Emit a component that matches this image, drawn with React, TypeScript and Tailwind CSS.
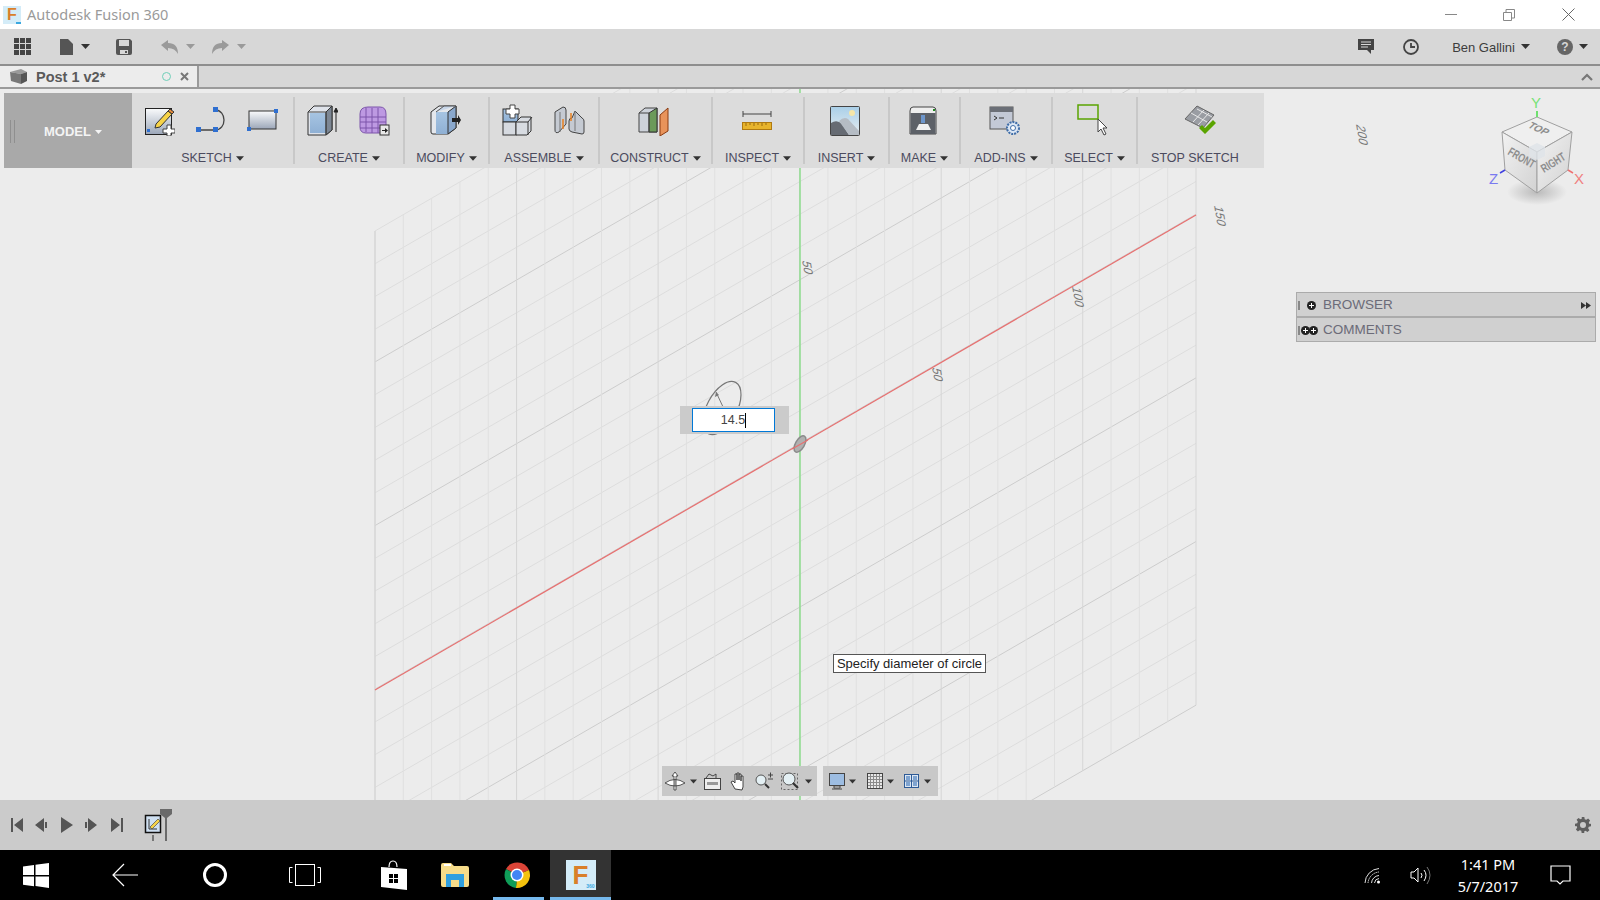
import React from "react";

const Caret = ({ c = "#333", w = 9, h = 5 }: { c?: string; w?: number; h?: number }) => (
  <svg width={w} height={h} viewBox="0 0 9 5" className="shrink-0">
    <path d="M0 0h9L4.5 5z" fill={c} />
  </svg>
);

const I = ({ children }: { children: React.ReactNode }) => (
  <svg width="32" height="32" viewBox="0 0 32 32" className="shrink-0">
    {children}
  </svg>
);

const Defs = () => (
  <svg width="0" height="0" className="block h-0 w-0">
    <defs>
      <linearGradient id="pad" x1="0" y1="0" x2="0" y2="1">
        <stop offset="0" stopColor="#fafbfc" />
        <stop offset="1" stopColor="#9ba6b8" />
      </linearGradient>
      <linearGradient id="blue" x1="0" y1="0" x2="0" y2="1">
        <stop offset="0" stopColor="#a6c4e2" />
        <stop offset="1" stopColor="#8fb0d4" />
      </linearGradient>
      <linearGradient id="sky" x1="0" y1="0" x2="0" y2="1">
        <stop offset="0" stopColor="#a9cfe8" />
        <stop offset="1" stopColor="#e8eef2" />
      </linearGradient>
      <linearGradient id="cube" x1="0" y1="0" x2="1" y2="1">
        <stop offset="0" stopColor="#f2f2f2" />
        <stop offset="1" stopColor="#d2d2d2" />
      </linearGradient>
    </defs>
  </svg>
);

const NewSketch = () => (
  <I>
    <rect x="2.5" y="4.5" width="26" height="26" fill="url(#pad)" stroke="#222" />
    <rect x="4" y="25" width="3" height="3" fill="#2f6fd0" />
    <path d="M13 20l12-13 4 3-12 13-5 1z" fill="#f7d348" stroke="#333" />
    <path d="M25 7l2-2 4 3-2 2z" fill="#e58a3c" stroke="#333" />
    <path d="M20 25h4v-4h4v4h4v4h-4v3h-4v-3h-4z" fill="#fff" stroke="#444" />
  </I>
);
const Spline = () => (
  <I>
    <path d="M3 26H20M20 6C32 6 32 26 20 26" fill="none" stroke="#444" strokeWidth="1.3" />
    <rect x="1" y="23" width="5" height="5" fill="#2f6fd0" />
    <rect x="18" y="23" width="5" height="5" fill="#2f6fd0" />
    <rect x="18" y="3" width="5" height="5" fill="#2f6fd0" />
  </I>
);
const RectTool = () => (
  <I>
    <rect x="2" y="7" width="27" height="18" fill="url(#pad)" stroke="#333" />
    <rect x="27" y="5" width="4" height="4" fill="#2f6fd0" />
    <rect x="0" y="23" width="4" height="4" fill="#2f6fd0" />
  </I>
);
const Extrude = () => (
  <I>
    <path d="M2 8l6-6h18v24l-6 5H2z" fill="#dfe3ea" stroke="#333" />
    <path d="M4 9h16v20H4z" fill="url(#blue)" />
    <path d="M20 8l6-6v24l-6 5z" fill="#7d8794" stroke="#333" />
    <path d="M2 8h18v23" fill="none" stroke="#444" />
    <path d="M30 28V5M28 8l2-4 2 4z" stroke="#222" fill="#222" />
  </I>
);
const Form = () => (
  <I>
    <path d="M2 10q0-7 8-7h12q6 0 6 7v14q0 5-6 5H8q-6 0-6-6z" fill="#bd99e2" stroke="#7c55aa" />
    <path d="M8 4v24M14 4v25M20 4v25M2 13h26M2 18h26M2 24h26" stroke="#7c55aa" />
    <rect x="22" y="21" width="9" height="10" fill="#e8e8e8" stroke="#333" />
    <path d="M24 26h3v-2l3 2.500-3 2.500v-2h-3z" fill="#222" />
  </I>
);
const Modify = () => (
  <I>
    <path d="M2 8l8-6h17v22l-8 6H4q-2 0-2-2z" fill="#e4e7ec" stroke="#333" />
    <path d="M7 8h12v22H7z" fill="url(#blue)" />
    <path d="M19 8l8-6v22l-8 6z" fill="#8aa8cc" stroke="#333" />
    <path d="M7 8l8-6h12" fill="#c6d5e8" stroke="#555" />
    <path d="M23 14h6v-3l3 5-3 5v-3h-6z" fill="#222" />
  </I>
);
const Assemble = () => (
  <I>
    <rect x="2" y="5" width="15" height="13" fill="url(#blue)" stroke="#333" />
    <rect x="2" y="18" width="13" height="13" fill="#d6dae0" stroke="#333" />
    <path d="M15 18l5-5h10v14l-4 4H15z" fill="#d8dce2" stroke="#333" />
    <path d="M15 18h12v13M27 18l4-5" fill="none" stroke="#333" />
    <path d="M5 5h4V1h5v4h4v5h-4v4H9v-4H5z" fill="#fff" stroke="#444" />
  </I>
);
const Joint = () => (
  <I>
    <path d="M2 8l8-5q3 0 3 3v14l-7 8q-4 2-4-2z" fill="#c5cad2" stroke="#444" />
    <path d="M7 8v20" stroke="#777" />
    <path d="M16 17q0-3 3-3l3-7 7 7q2 1 2 3v11q0 2-2 2l-10-2q-3-1-3-3z" fill="#c5cad2" stroke="#444" />
    <path d="M22 7v20" stroke="#777" />
    <path d="M10 15v10M18 9v8" stroke="#e8801f" strokeWidth="1.5" />
  </I>
);
const Construct = () => (
  <I>
    <path d="M1 9l6-5h12v24H1z" fill="#cdd2da" stroke="#444" />
    <path d="M11 9l8-5v24h-8z" fill="#6b9a5a" stroke="#333" />
    <path d="M1 9h10v19" fill="none" stroke="#444" />
    <path d="M22 11l8-7v23l-8 5z" fill="#e8935a" stroke="#8a3a10" />
  </I>
);
const Inspect = () => (
  <I>
    <path d="M2 7v6M30 7v6M2 10h28" stroke="#444" fill="none" />
    <rect x="1.500" y="18.500" width="29" height="7" fill="#e8b42c" stroke="#b07a10" />
    <path d="M5 19v3M9 19v2M13 19v3M17 19v2M21 19v3M25 19v2" stroke="#9a6a10" />
  </I>
);
const Insert = () => (
  <I>
    <rect x="1.500" y="2.500" width="29" height="29" fill="url(#sky)" stroke="#444" rx="1" />
    <circle cx="23" cy="9" r="3" fill="#f6e6a8" />
    <path d="M2 31V19q6-4 11 1l7 11z" fill="#666b73" />
    <path d="M10 17q5-5 9-2l11 12v4H20z" fill="#b5bcc4" />
  </I>
);
const Make = () => (
  <I>
    <path d="M3 7q0-4 3-4h20q3 0 3 4v23H3z" fill="#eeeeee" stroke="#444" />
    <rect x="3.500" y="9" width="25" height="21" fill="#5d6168" />
    <path d="M9 26l3-6h9l3 6z" fill="#f0f0f0" />
    <rect x="14" y="11" width="4" height="8" fill="#6d96cc" />
    <rect x="26" y="5" width="2" height="2" fill="#1f8a1f" />
  </I>
);
const AddIns = () => (
  <I>
    <rect x="1" y="3" width="23" height="22" fill="#c3c9d6" stroke="#555" />
    <rect x="1" y="3" width="23" height="5" fill="#6b6f77" />
    <path d="M5 12l3 2-3 2M10 14h5" stroke="#333" fill="none" />
    <circle cx="24" cy="24" r="6" fill="#dbe6f4" stroke="#3f6da8" strokeWidth="2" strokeDasharray="2 1" />
    <circle cx="24" cy="24" r="2.500" fill="#fff" stroke="#3f6da8" />
  </I>
);
const SelectIcon = () => (
  <I>
    <rect x="1" y="1" width="20" height="14" fill="none" stroke="#5aa400" strokeWidth="1.500" />
    <path d="M21 15v13l3-3 3 6 2-1-3-6h4z" fill="#fff" stroke="#444" />
  </I>
);
const StopSketch = () => (
  <I>
    <path d="M1 15L13 2l17 9-11 13z" fill="#9a9da3" stroke="#666" />
    <path d="M7 9l16 9M13 5l15 8M9 18L20 6M14 21L25 9" stroke="#e8e8e8" />
    <path d="M15 24l3-3 3 3 8-8 3 3-11 11z" fill="#5aa400" />
  </I>
);

type GroupProps = { w: string; label: string; caret?: boolean; children: React.ReactNode };
const Group = ({ w, label, caret = true, children }: GroupProps) => (
  <div className={`flex flex-col items-center pt-[11px] ${w}`}>
    <div className="flex h-[32px] items-center justify-center gap-5 pr-[3px]">{children}</div>
    <div className="mt-[15px] flex h-[14px] items-center gap-[4px] text-[12.5px] leading-[14px] text-[#4b4b5e]">
      {label}
      {caret && <Caret w={8} h={5} c="#333" />}
    </div>
  </div>
);
const Div = () => <div className="h-[67px] w-[2px] shrink-0 self-center bg-[#c8c8c8]" />;

const Ribbon = () => (
  <div className="absolute left-[4px] top-[4px] flex h-[75px] w-[1260px] bg-[#dcdcdc]">
    <div className="flex w-[128px] items-center bg-[#a9a9a9] pl-[6px] pt-[2px]">
      <div className="h-[23px] w-[5px] border-x border-[#8f8f8f]" />
      <div className="ml-[29px] flex items-center gap-[4px] text-[13px] font-bold text-[#f4f4f4]">
        MODEL
        <Caret w={7} h={4} c="#f4f4f4" />
      </div>
    </div>
    <Group w="w-[161px]" label="SKETCH">
      <NewSketch />
      <Spline />
      <RectTool />
    </Group>
    <Div />
    <Group w="w-[108px]" label="CREATE">
      <Extrude />
      <Form />
    </Group>
    <Div />
    <Group w="w-[83px]" label="MODIFY">
      <Modify />
    </Group>
    <Div />
    <Group w="w-[108px]" label="ASSEMBLE">
      <Assemble />
      <Joint />
    </Group>
    <Div />
    <Group w="w-[111px]" label="CONSTRUCT">
      <Construct />
    </Group>
    <Div />
    <Group w="w-[90px]" label="INSPECT">
      <Inspect />
    </Group>
    <Div />
    <Group w="w-[83px]" label="INSERT">
      <Insert />
    </Group>
    <Div />
    <Group w="w-[69px]" label="MAKE">
      <Make />
    </Group>
    <Div />
    <Group w="w-[90px]" label="ADD-INS">
      <AddIns />
    </Group>
    <Div />
    <Group w="w-[83px]" label="SELECT">
      <SelectIcon />
    </Group>
    <Div />
    <Group w="w-[126px] pr-[12px]" label="STOP SKETCH" caret={false}>
      <div className="ml-[13px]">
        <StopSketch />
      </div>
    </Group>
  </div>
);

// grid plane, drawn in page coordinates
const STEP_X = 28.31;
const STEP_Y = 32.73;
const RISE = 475;
const Grid = () => {
  const rows = Array.from({ length: 30 }, (_, i) => i);
  const cols = Array.from({ length: 30 }, (_, i) => i);
  return (
    <svg className="absolute inset-0 h-full w-full" viewBox="0 89 1600 711">
      {rows.map((i) => {
        const y = 231 + STEP_Y * i;
        const major = (i + 1) % 5 === 0;
        return <line key={i} x1="375" y1={y} x2="1196" y2={y - RISE} stroke={major ? "#cdcdcd" : "#dddddd"} />;
      })}
      {cols.map((i) => {
        const x = 375 + STEP_X * i;
        const top = 231 - (x - 375) * (RISE / 821);
        const bottom = 231 + 29 * STEP_Y - (x - 375) * (RISE / 821);
        const major = i % 5 === 0 || i === 29;
        return <line key={i} x1={x} y1={top} x2={x} y2={bottom} stroke={major ? "#d6d6d6" : "#e0e0e0"} strokeWidth={i === 0 ? 1.5 : 1} />;
      })}
      <line x1="375" y1="690" x2="1196" y2="215" stroke="#e86f6f" strokeWidth="1.200" />
      <line x1="800" y1="89" x2="800" y2="800" stroke="#8edc8e" strokeWidth="1.500" />
      <g fontFamily="Liberation Sans, sans-serif" fontSize="12" fill="#777">
        <text transform="translate(802 260) rotate(80) skewX(-25)">50</text>
        <text transform="translate(932 367) rotate(80) skewX(-25)">50</text>
        <text transform="translate(1072 286) rotate(80) skewX(-25)">100</text>
        <text transform="translate(1214 205) rotate(80) skewX(-25)">150</text>
        <text transform="translate(1356 124) rotate(80) skewX(-25)">200</text>
      </g>
      <ellipse cx="722" cy="408" rx="15" ry="29" transform="rotate(28 722 408)" fill="none" stroke="#777" strokeWidth="1.200" />
      <path d="M716 392l8 17" stroke="#777" fill="none" />
      <path d="M716 392l-1 5 4-2z" fill="#777" />
      <ellipse cx="800" cy="444" rx="4.500" ry="9" transform="rotate(30 800 444)" fill="#b0b0b0" stroke="#8a8a8a" strokeWidth="1.500" />
      <line x1="792" y1="449" x2="808" y2="440" stroke="#e86f6f" strokeWidth="1.200" />
    </svg>
  );
};

const ViewCube = () => (
  <svg className="absolute right-0 top-[5px]" width="130" height="116" viewBox="1470 94 130 116">
    <defs>
      <radialGradient id="shade">
        <stop offset="0" stopColor="#999" stopOpacity="0.6" />
        <stop offset="1" stopColor="#999" stopOpacity="0" />
      </radialGradient>
    </defs>
    <ellipse cx="1537" cy="192" rx="30" ry="13" fill="url(#shade)" />
    <path d="M1537 117l35 15-35 20-35-20z" fill="#efefef" stroke="#a0a0a0" />
    <path d="M1502 132l35 20v41l-32-23z" fill="url(#cube)" stroke="#a0a0a0" />
    <path d="M1572 132l-35 20v41l31-23z" fill="url(#cube)" stroke="#a0a0a0" />
    <path d="M1537 143l8 4v9l-8 4-8-4v-9z" fill="#dfe3e8" opacity="0.8" />
    <path d="M1537 117v-6" stroke="#6fe06f" strokeWidth="2" />
    <path d="M1505 170l-5 3" stroke="#4040e0" strokeWidth="1.500" />
    <path d="M1568 170l5 3" stroke="#ef7070" strokeWidth="1.500" />
    <g fontFamily="Liberation Sans, sans-serif" fontWeight="400">
      <text x="1531" y="108" fontSize="15" fill="#76e276">Y</text>
      <text x="1574" y="184" fontSize="15" fill="#f08080">X</text>
      <text x="1489" y="184" fontSize="15" fill="#7a7af0">Z</text>
    </g>
    <g fontFamily="Liberation Sans, sans-serif" fontSize="10" fill="#8e8e8e" fontWeight="700">
      <text transform="translate(1527 127) rotate(25) skewX(-20)">TOP</text>
      <text transform="translate(1507 154) rotate(30) scale(0.85 1.2)">FRONT</text>
      <text transform="translate(1544 173) rotate(-32) scale(0.85 1.2)">RIGHT</text>
    </g>
  </svg>
);

const NavIcons = () => (
  <div className="absolute bottom-[4px] left-[662px] flex gap-[6px]">
    <div className="flex h-[30px] w-[155px] items-center bg-[#c8c8c8] pl-[1px]">
      <svg width="24" height="22" viewBox="0 0 24 22">
        <path d="M12 2l-3 4h2v14h2V6h2zM2 13q10-7 20 0-10 6-20 0z" fill="#fff" stroke="#333" strokeWidth="0.8" />
      </svg>
      <div className="ml-[3px]"><Caret w={7} h={5} /></div>
      <svg className="ml-[6px]" width="20" height="20" viewBox="0 0 20 20">
        <rect x="1.500" y="7.500" width="16" height="11" fill="#eee" stroke="#444" />
        <rect x="4" y="11" width="11" height="3" fill="#999" />
        <path d="M3 7l3-4 4 2 3-2v4" fill="none" stroke="#444" />
      </svg>
      <svg className="ml-[7px]" width="18" height="20" viewBox="0 0 18 20">
        <path d="M5 18l-4-7 2-1 2 2V3h2v6-7h2v7-6h2v7-5h2v11l-1 3z" fill="#fff" stroke="#333" strokeWidth="0.9" />
      </svg>
      <svg className="ml-[6px]" width="20" height="20" viewBox="0 0 20 20">
        <circle cx="7" cy="9" r="5" fill="#e4f0f4" stroke="#555" />
        <path d="M11 13l4 4" stroke="#333" strokeWidth="2" />
        <path d="M14 4h5M16.500 1.500v5M14 8h5" stroke="#444" />
      </svg>
      <svg className="ml-[7px]" width="20" height="20" viewBox="0 0 20 20">
        <rect x="0.500" y="2.500" width="16" height="16" fill="none" stroke="#666" strokeDasharray="2 2" />
        <circle cx="8" cy="8" r="6" fill="#e4f0f4" stroke="#555" />
        <path d="M12 12l5 5" stroke="#333" strokeWidth="2.200" />
      </svg>
      <div className="ml-[4px]"><Caret w={7} h={5} /></div>
    </div>
    <div className="flex h-[30px] w-[115px] items-center bg-[#c8c8c8] pl-[6px]">
      <svg width="16" height="17" viewBox="0 0 16 17">
        <rect x="0.500" y="0.500" width="15" height="12" fill="#9dbde2" stroke="#444" />
        <path d="M5 13h6v2H5zM3 16h10" stroke="#444" fill="#eee" />
      </svg>
      <div className="ml-[4px]"><Caret w={7} h={5} /></div>
      <svg className="ml-[11px]" width="16" height="16" viewBox="0 0 16 16">
        <rect x="0.500" y="0.500" width="15" height="15" fill="#e8e8e8" stroke="#444" />
        <path d="M3.500 1v14M6.500 1v14M9.500 1v14M12.500 1v14M1 3.500h14M1 6.500h14M1 9.500h14M1 12.500h14" stroke="#8a8a8a" />
      </svg>
      <div className="ml-[4px]"><Caret w={7} h={5} /></div>
      <svg className="ml-[10px]" width="15" height="14" viewBox="0 0 15 14">
        <rect x="0.500" y="0.500" width="14" height="13" fill="#dce6f2" stroke="#2d5a96" />
        <path d="M2 2h4v4H2zM9 2h4v4H9zM2 8h4v4H2zM9 8h4v4H9z" fill="#7ea3d0" />
        <path d="M7.500 1v12M1 7h13" stroke="#2d5a96" />
      </svg>
      <div className="ml-[5px]"><Caret w={7} h={5} /></div>
    </div>
  </div>
);

const SidePanel = ({ label, children, right, shift }: { label: string; children: React.ReactNode; right?: boolean; shift?: boolean }) => (
  <div className="flex h-[25px] items-center border border-[#ababab] bg-[#d0d0d0] pl-[1px] pr-[4px] pt-[1px]">
    <div className="h-[9px] w-[2px] border-x border-[#888]" />
    <div className={shift ? "flex w-[22px] justify-start pl-[1px]" : "flex w-[22px] justify-center"}>{children}</div>
    <span className="ml-[1px] text-[13.5px] text-[#6b6b78]">{label}</span>
    {right && (
      <svg className="ml-auto" width="10" height="7" viewBox="0 0 10 7">
        <path d="M0 0l5 3.500L0 7zM5 0l5 3.500L5 7z" fill="#333" />
      </svg>
    )}
  </div>
);

const Plus = () => (
  <svg width="9" height="9" viewBox="0 0 9 9">
    <circle cx="4.500" cy="4.500" r="4.500" fill="#222" />
    <path d="M2 4.500h5M4.500 2v5" stroke="#fff" />
  </svg>
);

const Timeline = () => (
  <div className="flex h-[50px] items-center bg-[#cbcbcb] pl-[11px] pr-[9px]">
    <svg width="112" height="16" viewBox="0 0 112 16">
      <path d="M0 1h2v14H0zM12 1v14L3 8z" fill="#555" />
      <path d="M24 8l9-7v14zM34 5h2v6h-2z" fill="#555" />
      <path d="M50 0l12 8-12 8z" fill="#555" />
      <path d="M74 5h2v6h-2zM77 1l9 7-9 7z" fill="#555" />
      <path d="M100 1l9 7-9 7zM110 1h2v14h-2z" fill="#555" />
    </svg>
    <div className="ml-[21px] flex h-[32px] items-start pt-[6px]">
      <svg width="28" height="32" viewBox="0 0 28 32" className="-mt-[6px]">
        <rect x="1.500" y="6.500" width="15" height="17" fill="#cfe0f2" stroke="#111" strokeWidth="1.500" />
        <path d="M5 10v10h8" stroke="#333" fill="none" />
        <path d="M6 18l8-8 2 2-8 8z" fill="#f7d348" stroke="#333" strokeWidth="0.600" />
        <path d="M9 26v6" stroke="#777" strokeWidth="2" />
        <path d="M16 0h12v5l-5 4-2 0-5-4z" fill="#6a6a6a" />
        <path d="M22 4v28" stroke="#6a6a6a" strokeWidth="2" />
      </svg>
    </div>
    <svg className="ml-auto" width="16" height="16" viewBox="0 0 24 24">
      <path
        fill="#5f5f5f"
        fillRule="evenodd"
        d="M10 0h4l.6 3.300 2.300 1 2.800-1.900 2.900 2.900-1.900 2.800 1 2.300L24 10v4l-3.300.6-1 2.300 1.900 2.800-2.900 2.900-2.800-1.900-2.300 1L14 24h-4l-.6-3.300-2.300-1-2.800 1.900-2.900-2.900 1.900-2.800-1-2.300L0 14v-4l3.300-.6 1-2.300-1.900-2.800 2.900-2.900 2.800 1.900 2.300-1zM12 7.500a4.500 4.500 0 100 9 4.500 4.500 0 000-9z"
      />
    </svg>
  </div>
);

const FusionTile = ({ big }: { big?: boolean }) => (
  <div
    className={
      big
        ? "relative flex h-[30px] w-[30px] items-center justify-center bg-[#d4ecf8]"
        : "relative flex h-[18px] w-[18px] items-center justify-center bg-[#d4ecf8]"
    }
  >
    <span
      className={
        big
          ? "text-[26px] font-bold leading-none text-[#d97f2a] [font-family:'Liberation_Sans',sans-serif]"
          : "text-[16px] font-bold leading-none text-[#d97f2a] [font-family:'Liberation_Sans',sans-serif]"
      }
    >
      F
    </span>
    <span
      className={
        big
          ? "absolute bottom-[1px] right-[1px] text-[5px] font-bold leading-none text-[#3aa8e0]"
          : "absolute bottom-0 right-0 h-[2px] w-[5px] bg-[#3aa8e0]"
      }
    >
      {big ? "360" : ""}
    </span>
  </div>
);

const Taskbar = () => (
  <div className="flex h-[50px] items-stretch bg-black text-white">
    <div className="flex w-[71px] items-center justify-center">
      <svg width="26" height="25" viewBox="0 0 26 25">
        <path d="M0 3.500l11-1.600V12H0zM12.500 1.700L26 0v12H12.500zM0 13.500h11v9.800L0 21.700zM12.500 13.500H26V25l-13.500-1.900z" fill="#fff" />
      </svg>
    </div>
    <div className="flex w-[108px] items-center justify-center">
      <svg width="26" height="24" viewBox="0 0 26 24">
        <path d="M26 12H1M12 1L1 12l11 11" fill="none" stroke="#fff" strokeWidth="1.200" />
      </svg>
    </div>
    <div className="flex w-[71px] items-center justify-center">
      <div className="h-[24px] w-[24px] rounded-full border-[3px] border-white" />
    </div>
    <div className="flex w-[110px] items-center justify-center">
      <svg width="32" height="22" viewBox="0 0 32 22">
        <path d="M3.500 3.500H.5v15h3M28.500 3.500h3v15h-3" fill="none" stroke="#fff" />
        <rect x="6.500" y="0.500" width="19" height="21" fill="none" stroke="#fff" />
      </svg>
    </div>
    <div className="flex w-[68px] items-center justify-center">
      <svg width="26" height="30" viewBox="0 0 26 30">
        <path d="M8 7q0-6 4-6t4 6" fill="none" stroke="#fff" strokeWidth="1.200" />
        <path d="M0 7l26 2v21L0 27z" fill="#fff" />
        <path d="M8 14h4v4H8zM13 14h4v4h-4zM8 19h4v4H8zM13 19h4v4h-4z" fill="#000" />
      </svg>
    </div>
    <div className="flex w-[54px] items-center justify-center">
      <svg width="28" height="24" viewBox="0 0 28 24">
        <path d="M0 2q0-2 2-2h8l3 3h13q2 0 2 2v17q0 2-2 2H2q-2 0-2-2z" fill="#f6dc8a" />
        <rect x="3" y="1" width="7" height="2" fill="#fff" />
        <path d="M5 24V11h18v13h-5v-7h-8v7z" fill="#2f9fe0" />
      </svg>
    </div>
    <div className="ml-[11px] flex w-[51px] items-center justify-center border-b-[3px] border-[#76b9ed] pr-[3px] pt-[3px]">
      <svg width="28" height="28" viewBox="0 0 28 28">
        <path d="M14 14L3 8A13 13 0 0 1 26 9z" fill="#db4437" />
        <path d="M14 14L26 9A13 13 0 0 1 13 27z" fill="#f4c20d" />
        <path d="M14 14L13 27A13 13 0 0 1 3 8z" fill="#0f9d58" />
        <circle cx="14" cy="14" r="6.500" fill="#fff" />
        <circle cx="14" cy="14" r="5" fill="#4285f4" />
      </svg>
    </div>
    <div className="ml-[6px] flex w-[61px] items-center justify-center border-b-[3px] border-[#76b9ed] bg-[#333] pt-[3px]">
      <FusionTile big />
    </div>
    <div className="ml-auto flex items-center">
      <svg width="17" height="17" viewBox="0 0 17 17">
        <g fill="none" stroke="#ddd">
          <path d="M1 16A15 15 0 0 1 15 1.500" />
          <path d="M4 16A12 12 0 0 1 15 5" strokeDasharray="1.500 0.700" />
          <path d="M7.500 16A8 8 0 0 1 15 8.500" />
          <path d="M10.500 16A5 5 0 0 1 15 11.500" />
        </g>
        <circle cx="14.500" cy="15" r="1.500" fill="#fff" />
      </svg>
      <svg className="ml-[29px]" width="21" height="19" viewBox="0 0 21 19">
        <path d="M1 6h3l4-4v14l-4-4H1z" fill="none" stroke="#fff" />
        <path d="M11 7q2 2 0 5M14 4q4 5 0 11" fill="none" stroke="#fff" />
        <path d="M17 1q6 8 0 17" fill="none" stroke="#777" />
      </svg>
      <div className="ml-[26px] flex w-[62px] flex-col items-center text-[14.5px] leading-[22px] [font-family:'Noto_Sans',sans-serif]">
        <span>1:41 PM</span>
        <span>5/7/2017</span>
      </div>
      <svg className="ml-[31px] mr-[29px]" width="21" height="21" viewBox="0 0 21 21">
        <path d="M1 1h19v15h-7l-3 3-3-3H1z" fill="none" stroke="#fff" strokeWidth="1.200" />
      </svg>
    </div>
  </div>
);

export default function App() {
  return (
    <div className="flex h-screen w-[1600px] flex-col overflow-hidden bg-[#ececec] [font-family:'Liberation_Sans',Arial,sans-serif]">
      <Defs />
      {/* title bar */}
      <div className="flex h-[29px] shrink-0 items-center bg-white pl-[3px]">
        <FusionTile />
        <span className="ml-[6px] text-[14.5px] text-[#9a9a9a] [font-family:'Noto_Sans',sans-serif]">Autodesk Fusion 360</span>
        <div className="ml-auto flex items-center pr-[25px]">
          <div className="h-[1px] w-[12px] bg-[#888]" />
          <svg className="ml-[46px]" width="12" height="12" viewBox="0 0 12 12">
            <path d="M.5 3.500h8v8h-8zM3 3V.5h8.500V9H9" fill="none" stroke="#888" />
          </svg>
          <svg className="ml-[47px]" width="13" height="13" viewBox="0 0 13 13">
            <path d="M.5.5l12 12M12.500.5l-12 12" stroke="#666" />
          </svg>
        </div>
      </div>

      {/* quick access */}
      <div className="flex h-[37px] shrink-0 items-center border-b-2 border-[#8e8e8e] bg-[#d7d7d7] pl-[14px] pr-[12px]">
        <svg width="17" height="17" viewBox="0 0 17 17">
          <path d="M0 0h5v5H0zM6 0h5v5H6zM12 0h5v5h-5zM0 6h5v5H0zM6 6h5v5H6zM12 6h5v5h-5zM0 12h5v5H0zM6 12h5v5H6zM12 12h5v5h-5z" fill="#444" />
        </svg>
        <svg className="ml-[29px]" width="14" height="16" viewBox="0 0 14 16">
          <path d="M0 0h8l5 5v11H0z" fill="#555" />
        </svg>
        <div className="ml-[7px]"><Caret /></div>
        <svg className="ml-[26px]" width="16" height="16" viewBox="0 0 16 16">
          <path d="M0 2q0-2 2-2h12l2 2v12q0 2-2 2H2q-2 0-2-2z" fill="#555" />
          <rect x="3" y="1" width="10" height="6" fill="#d7d7d7" />
          <rect x="4" y="11" width="8" height="4" fill="#d7d7d7" />
          <rect x="9" y="12" width="2" height="2" fill="#555" />
        </svg>
        <svg className="ml-[29px]" width="17" height="14" viewBox="0 0 17 14">
          <path d="M0 5l7-5v3q10 0 10 11-3-6-10-6v3z" fill="#9a9a9a" />
        </svg>
        <div className="ml-[8px]"><Caret c="#9a9a9a" /></div>
        <svg className="ml-[17px]" width="17" height="14" viewBox="0 0 17 14">
          <path d="M17 5l-7-5v3Q0 3 0 14q3-6 10-6v3z" fill="#9a9a9a" />
        </svg>
        <div className="ml-[8px]"><Caret c="#9a9a9a" /></div>
        <div className="ml-auto flex items-center">
          <svg width="16" height="15" viewBox="0 0 16 15">
            <path d="M0 0h16v11h-3v4l-4-4H0z" fill="#444" />
            <path d="M3 3h10M3 5.500h10M3 8h7" stroke="#d7d7d7" />
          </svg>
          <svg className="ml-[29px]" width="16" height="16" viewBox="0 0 16 16">
            <circle cx="8" cy="8" r="7" fill="none" stroke="#444" strokeWidth="1.800" />
            <path d="M8 4v4h4" fill="none" stroke="#444" strokeWidth="1.800" />
          </svg>
          <span className="ml-[33px] pt-[2px] text-[13px] text-[#3d3d3d]">Ben Gallini</span>
          <div className="ml-[6px]"><Caret /></div>
          <div className="ml-[27px] flex h-[16px] w-[16px] items-center justify-center rounded-full bg-[#666] text-[12px] font-bold text-[#d7d7d7]">?</div>
          <div className="ml-[6px]"><Caret /></div>
        </div>
      </div>

      {/* document tab */}
      <div className="flex h-[23px] shrink-0 items-stretch border-b-2 border-[#9a9a9a] bg-[#d7d7d7]">
        <div className="flex w-[199px] items-center border-r-2 border-[#9a9a9a] bg-[#ececec] pl-[10px]">
          <svg width="17" height="15" viewBox="0 0 17 15">
            <path d="M0 3l11-3 6 3-6 2z" fill="#9a9a9a" />
            <path d="M0 3l11 2v10L1 12z" fill="#777" />
            <path d="M11 5l6-2v9l-6 3z" fill="#555" />
          </svg>
          <span className="ml-[9px] pt-[2px] text-[14.5px] font-bold text-[#5a5a5a]">Post 1 v2*</span>
          <div className="ml-[57px] h-[9px] w-[9px] rounded-full border border-[#6fcfb8]" />
          <svg className="ml-[9px]" width="9" height="9" viewBox="0 0 9 9">
            <path d="M1 1l7 7M8 1L1 8" stroke="#777" strokeWidth="2" />
          </svg>
        </div>
        <svg className="ml-auto mr-[7px] self-center" width="12" height="8" viewBox="0 0 12 8">
          <path d="M1 7l5-5 5 5" fill="none" stroke="#777" strokeWidth="2.200" />
        </svg>
      </div>

      {/* canvas */}
      <div className="relative min-h-0 flex-1 bg-[#ececec]">
        <Grid />
        <Ribbon />
        <ViewCube />
        <div className="absolute left-[1296px] top-[203px] flex w-[300px] flex-col">
          <SidePanel label="BROWSER" right>
            <Plus />
          </SidePanel>
          <SidePanel label="COMMENTS" shift>
            <div className="flex -space-x-[1px]">
              <Plus />
              <Plus />
            </div>
          </SidePanel>
        </div>
        <div className="absolute left-[680px] top-[317px] flex h-[28px] w-[109px] items-center justify-start bg-[#cbcbcb] pl-[12px]">
          <div className="flex h-[24px] w-[83px] items-center justify-center border-[1.5px] border-[#0078d7] bg-white text-[12.5px] text-[#444]">
            14.5<span className="h-[15px] w-[1px] bg-black" />
          </div>
        </div>
        <div className="absolute left-[833px] top-[565px] flex h-[19px] w-[153px] items-center justify-center border border-[#555] bg-white text-[13px] text-[#222]">
          Specify diameter of circle
        </div>
        <NavIcons />
      </div>

      <Timeline />
      <Taskbar />
    </div>
  );
}
